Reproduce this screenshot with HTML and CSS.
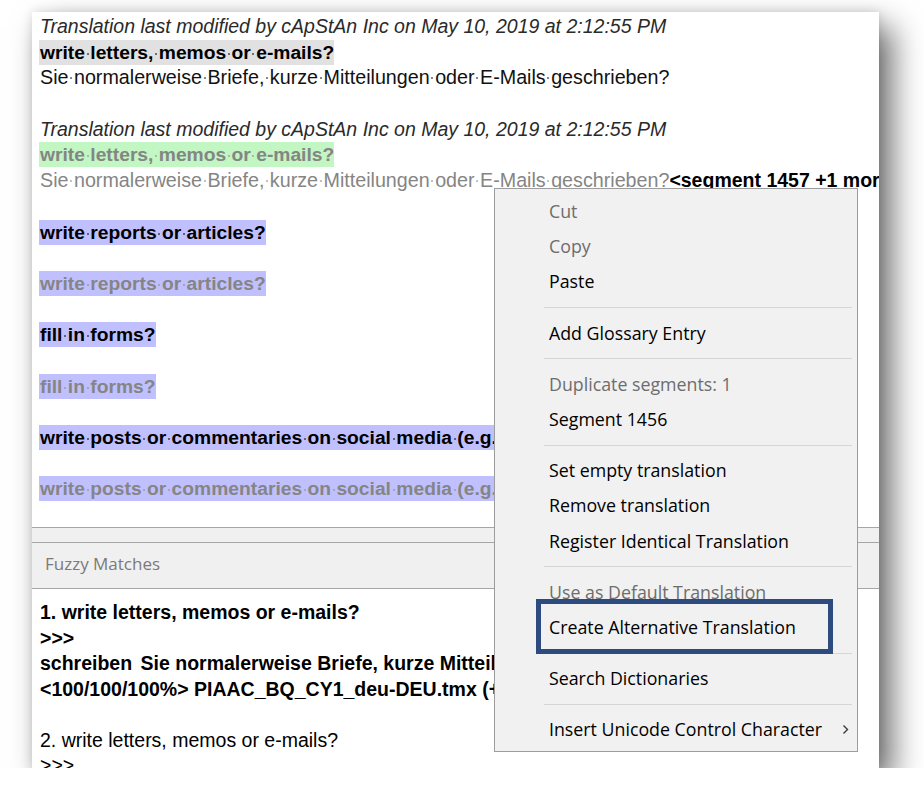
FILE: index.html
```html
<!DOCTYPE html>
<html lang="en">
<head>
<meta charset="utf-8">
<title>OmegaT editor context menu</title>
<link rel="stylesheet" href="styles.css">
</head>
<body>
<div class="window">
  <div class="editor">
    <div class="line meta">Translation last modified by cApStAn Inc on May 10, 2019 at 2:12:55 PM</div>
    <div class="line"><span class="hl hl-grey src">write<span class="ws"> </span>letters,<span class="ws"> </span>memos<span class="ws"> </span>or<span class="ws"> </span>e-mails?</span></div>
    <div class="line tgt">Sie<span class="ws"> </span>normalerweise<span class="ws"> </span>Briefe,<span class="ws"> </span>kurze<span class="ws"> </span>Mitteilungen<span class="ws"> </span>oder<span class="ws"> </span>E-Mails<span class="ws"> </span>geschrieben?</div>
    <div class="line"></div>
    <div class="line meta">Translation last modified by cApStAn Inc on May 10, 2019 at 2:12:55 PM</div>
    <div class="line"><span class="hl hl-green src dim">write<span class="ws"> </span>letters,<span class="ws"> </span>memos<span class="ws"> </span>or<span class="ws"> </span>e-mails?</span></div>
    <div class="line tgt dim">Sie<span class="ws"> </span>normalerweise<span class="ws"> </span>Briefe,<span class="ws"> </span>kurze<span class="ws"> </span>Mitteilungen<span class="ws"> </span>oder<span class="ws"> </span>E-Mails<span class="ws"> </span>geschrieben?<span class="marker">&lt;segment 1457 +1 more&gt;</span></div>
    <div class="line"></div>
    <div class="line"><span class="hl hl-purple src">write<span class="ws"> </span>reports<span class="ws"> </span>or<span class="ws"> </span>articles?</span></div>
    <div class="line"></div>
    <div class="line"><span class="hl hl-purple src dim">write<span class="ws"> </span>reports<span class="ws"> </span>or<span class="ws"> </span>articles?</span></div>
    <div class="line"></div>
    <div class="line"><span class="hl hl-purple src">fill<span class="ws"> </span>in<span class="ws"> </span>forms?</span></div>
    <div class="line"></div>
    <div class="line"><span class="hl hl-purple src dim">fill<span class="ws"> </span>in<span class="ws"> </span>forms?</span></div>
    <div class="line"></div>
    <div class="line"><span class="hl hl-purple src">write<span class="ws"> </span>posts<span class="ws"> </span>or<span class="ws"> </span>commentaries<span class="ws"> </span>on<span class="ws"> </span>social<span class="ws"> </span>media<span class="ws"> </span>(e.g.<span class="ws"> </span>Facebook)?</span></div>
    <div class="line"></div>
    <div class="line"><span class="hl hl-purple src dim">write<span class="ws"> </span>posts<span class="ws"> </span>or<span class="ws"> </span>commentaries<span class="ws"> </span>on<span class="ws"> </span>social<span class="ws"> </span>media<span class="ws"> </span>(e.g.<span class="ws"> </span>Facebook)?</span></div>
  </div>
  <div class="splitter"></div>
  <div class="pane-header">Fuzzy Matches</div>
  <div class="fuzzy">
    <div class="line b">1. write letters, memos or e-mails?</div>
    <div class="line b">&gt;&gt;&gt;</div>
    <div class="line b">schreiben <span class="gap">Sie</span> normalerweise Briefe, kurze Mitteilungen oder E-Mails?</div>
    <div class="line b">&lt;100/100/100%&gt; PIAAC_BQ_CY1_deu-DEU.tmx (+1 more)</div>
    <div class="line"></div>
    <div class="line">2. write letters, memos or e-mails?</div>
    <div class="line">&gt;&gt;&gt;</div>
  </div>

  <div class="menu">
    <div class="item disabled">Cut</div>
    <div class="item disabled">Copy</div>
    <div class="item">Paste</div>
    <div class="sep"></div>
    <div class="item">Add Glossary Entry</div>
    <div class="sep"></div>
    <div class="item disabled">Duplicate segments: 1</div>
    <div class="item">Segment 1456</div>
    <div class="sep"></div>
    <div class="item">Set empty translation</div>
    <div class="item">Remove translation</div>
    <div class="item">Register Identical Translation</div>
    <div class="sep"></div>
    <div class="item disabled">Use as Default Translation</div>
    <div class="item">Create Alternative Translation</div>
    <div class="sep"></div>
    <div class="item">Search Dictionaries</div>
    <div class="sep"></div>
    <div class="item submenu">Insert Unicode Control Character
      <svg class="chev" width="7" height="11" viewBox="0 0 7 11"><path d="M1.5 1.5 L5.5 5.5 L1.5 9.5" fill="none" stroke="#3a3a3a" stroke-width="1.4"/></svg>
    </div>
    <div class="callout"></div>
  </div>
</div>
</body>
</html>
```
FILE: styles.css
```css
html, body {
  margin: 0;
  padding: 0;
  background: #ffffff;
}

.window {
  position: relative;
  width: 847px;
  height: 756px;
  margin: 12px 0 0 32px;
  background: #ffffff;
  overflow: hidden;
  display: flex;
  flex-direction: column;
  box-shadow: 13px 15px 30px rgba(0, 0, 0, 0.58), 0 0 10px rgba(0, 0, 0, 0.12);
  font-family: "Liberation Sans", Arial, sans-serif;
  font-size: 19.5px;
  color: #000;
}

.editor {
  height: 513px;
  padding: 2px 0 0 8px;
  overflow: hidden;
  flex: none;
}

.line {
  height: 25.7px;
  line-height: 25.7px;
  white-space: nowrap;
}

.meta {
  font-style: italic;
  color: #2a2a2a;
}

.tgt {
  color: #111;
  font-size: 19.7px;
}

.ws {
  position: relative;
}

.ws::after {
  content: "";
  position: absolute;
  left: 50%;
  top: 11px;
  width: 2px;
  height: 2px;
  margin-left: -1px;
  background: currentColor;
  opacity: 0.5;
}

.hl {
  display: inline-block;
  height: 25px;
  line-height: 25.7px;
  padding-left: 1px;
  margin-left: -1px;
}

.hl-grey { background: #e1e1e1; }
.hl-green { background: #c2f6c2; }
.hl-purple { background: #c1c0fe; }

.src { font-weight: bold; font-size: 19.25px; }
.dim { color: #858585; }

.marker {
  font-weight: bold;
  color: #000;
  font-size: 19.5px;
}

.splitter {
  flex: none;
  height: 14px;
  background: #f0f0f0;
  border-top: 1px solid #a6a6a6;
  border-bottom: 1px solid #a6a6a6;
}

.pane-header {
  flex: none;
  height: 41px;
  padding: 0 0 4px 13px;
  background: #f0f0f0;
  border-bottom: 1px solid #a6a6a6;
  display: flex;
  align-items: center;
  font-family: "Open Sans", "Noto Sans", sans-serif;
  font-size: 17px;
  color: #7a7a7a;
}

.fuzzy {
  flex: 1;
  padding: 11px 0 0 8px;
}

.fuzzy .line { height: 25.5px; line-height: 25.5px; }
.b { font-weight: bold; }
.gap { margin-left: 3px; }

.menu {
  position: absolute;
  left: 462px;
  top: 176px;
  width: 362px;
  padding: 5px 0 4px;
  background: #f1f1f1;
  border: 1px solid #9d9d9d;
  font-family: "Open Sans", "Noto Sans", sans-serif;
  font-size: 17.8px;
  color: #000;
}

.item {
  position: relative;
  height: 35.2px;
  line-height: 35.2px;
  padding-left: 54px;
  white-space: nowrap;
}

.item.disabled { color: #6d6d6d; }

.sep {
  height: 16px;
  margin: 0 5px 0 49px;
  display: flex;
  align-items: center;
}

.sep::before {
  content: "";
  flex: 1;
  height: 1px;
  background: #d6d6d6;
}

.chev {
  position: absolute;
  right: 8px;
  top: 12px;
}

.callout {
  position: absolute;
  left: 41px;
  top: 410px;
  width: 287px;
  height: 45px;
  border: 5px solid #2d4b7f;
}
```
